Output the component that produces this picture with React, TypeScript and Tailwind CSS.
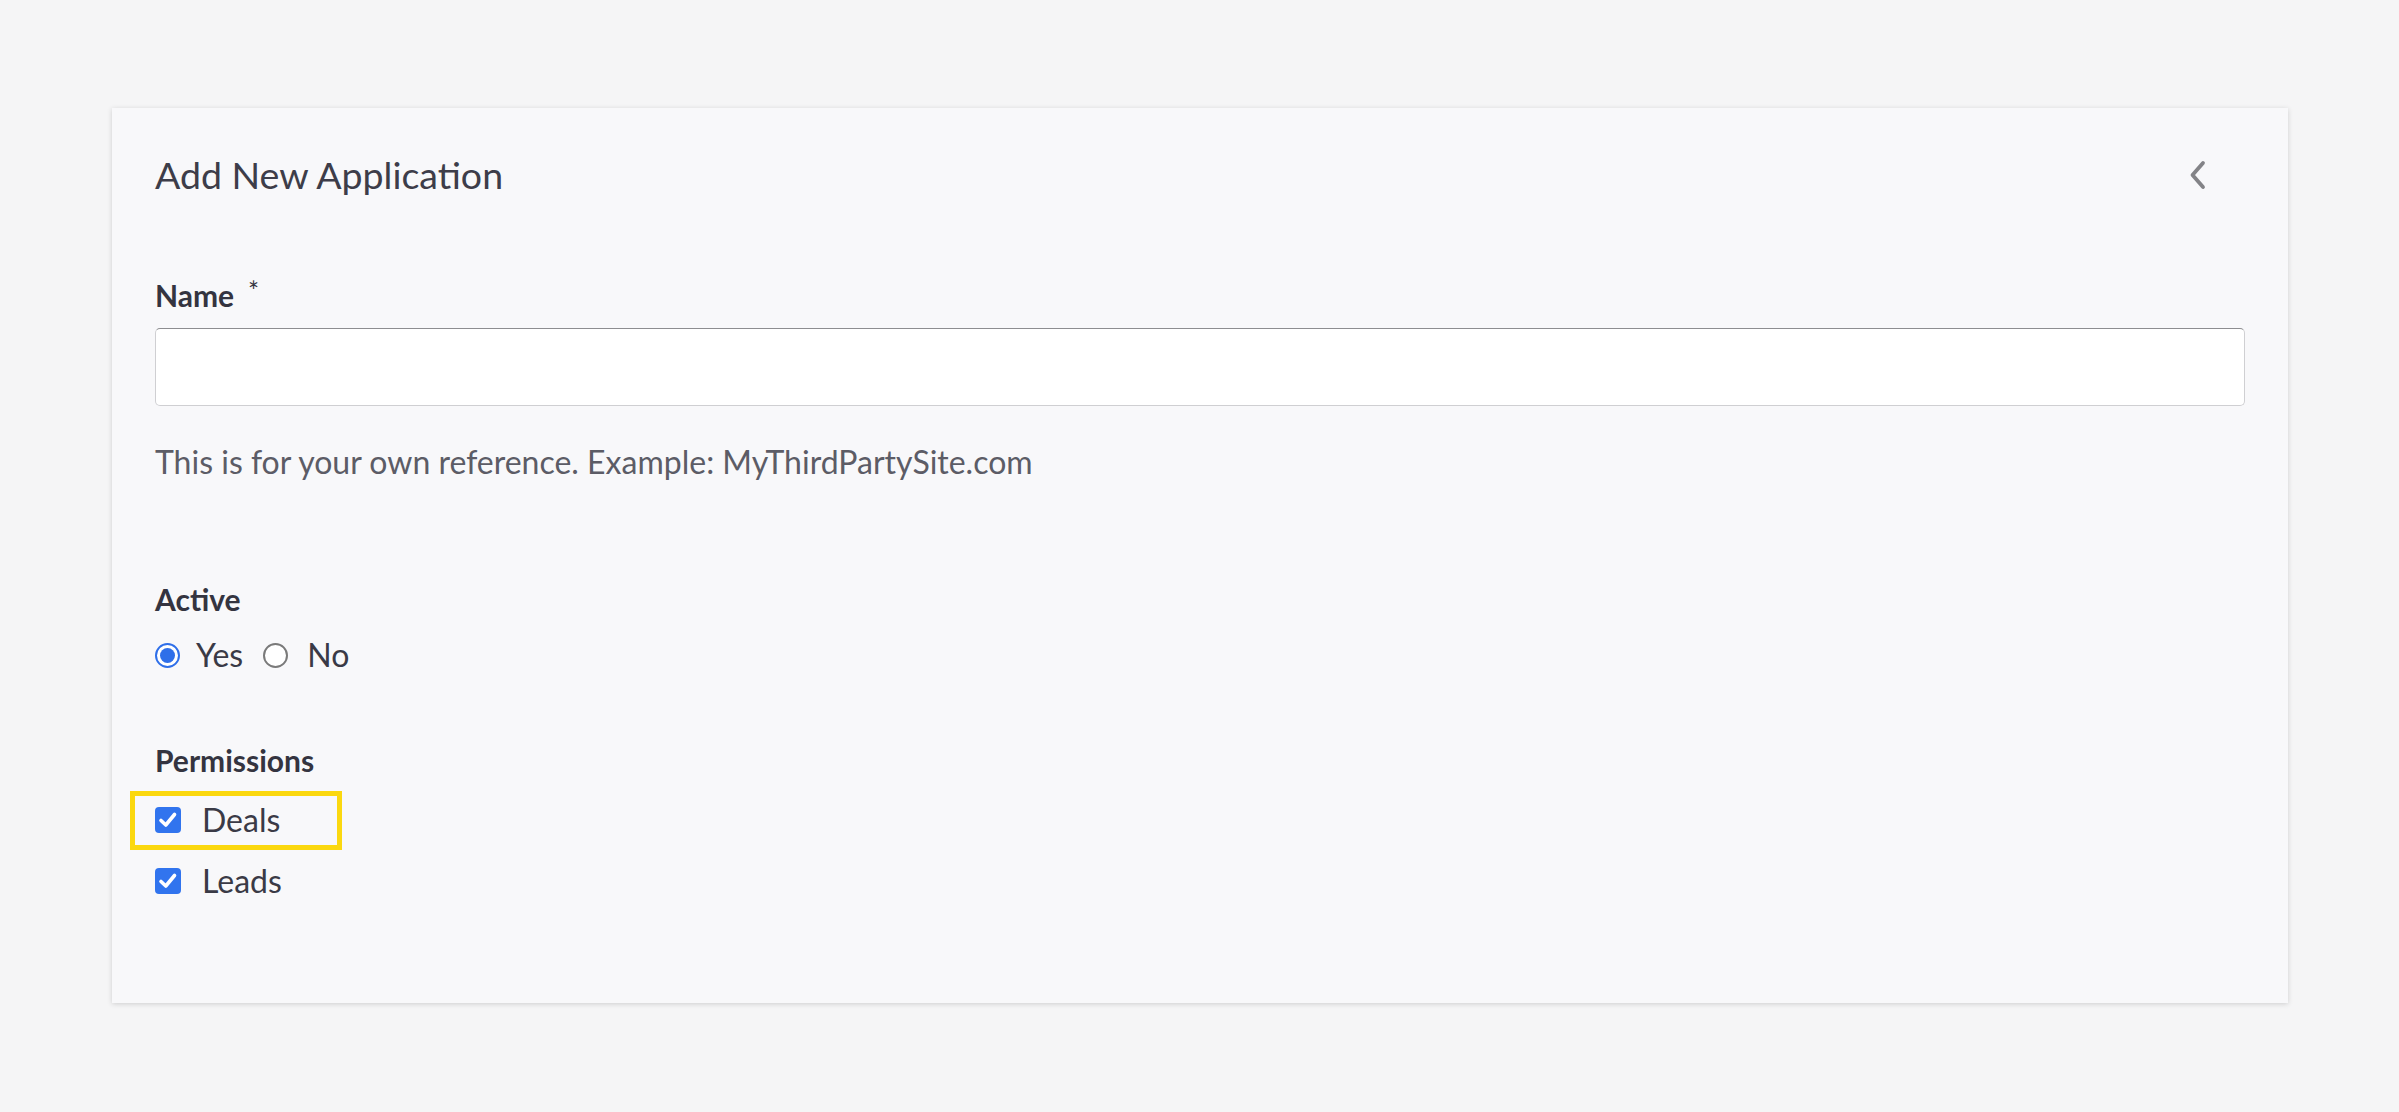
import { useState } from 'react'

const labelCls = "text-[30px] leading-[36px] font-bold text-[#343440]"

function Radio({ checked }: { checked: boolean }) {
  return checked ? (
    <span className="flex h-[25px] w-[25px] shrink-0 items-center justify-center rounded-full border-[2px] border-[#2f6fe9] bg-white">
      <span className="h-[15px] w-[15px] rounded-full bg-[#2f6fe9]" />
    </span>
  ) : (
    <span className="block h-[25px] w-[25px] shrink-0 rounded-full border-[2px] border-[#7a7a7a] bg-white" />
  )
}

function Checkbox() {
  return (
    <span className="flex h-[26px] w-[26px] shrink-0 items-center justify-center rounded-[4px] bg-[#3174ee]">
      <svg width="26" height="26" viewBox="0 0 26 26" fill="none">
        <path d="M6 13.5 L10.8 18 L19.5 7.5" stroke="white" strokeWidth="3.6" strokeLinecap="round" strokeLinejoin="round" />
      </svg>
    </span>
  )
}

export default function App() {
  const [name, setName] = useState('')

  return (
    <div className="min-h-screen bg-[#f5f5f6] pl-[112px] pt-[108px] font-['Lato',sans-serif]">
      <div className="h-[895px] w-[2176px] bg-[#f8f8fa] px-[43px] pt-[45px] shadow-[0_1px_5px_rgba(0,0,0,0.16)]">
        <div className="flex items-center justify-between">
          <h1 className="text-[37.5px] leading-[44px] font-normal text-[#3d3d49]">
            Add New Application
          </h1>
          <svg className="mr-[37px]" width="20" height="30" viewBox="0 0 20 30" fill="none">
            <path d="M15 3 L4.5 15 L15 27" stroke="#838387" strokeWidth="3.8" strokeLinecap="round" strokeLinejoin="round" />
          </svg>
        </div>

        <div className={`${labelCls} mt-[80px] flex items-start`}>
          Name
          <span className="ml-[14px] mt-[-1px] text-[26px] leading-[30px] font-normal">*</span>
        </div>
        <input
          value={name}
          onChange={(e) => setName(e.target.value)}
          className="mt-[15px] block h-[78px] w-full rounded-[5px] border border-[#cfcfd2] border-t-[#8d8d90] bg-white px-4 text-[30px] outline-none"
        />
        <p className="mt-[37px] text-[32px] leading-[38px] text-[#5c5c66]">
          This is for your own reference. Example: MyThirdPartySite.com
        </p>

        <div className={`${labelCls} mt-[100px]`}>Active</div>
        <div className="mt-[19px] flex h-[38px] items-center text-[32px] leading-[38px] text-[#3a3a46]">
          <Radio checked />
          <span className="ml-[16px]">Yes</span>
          <span className="ml-[20px] flex">
            <Radio checked={false} />
          </span>
          <span className="ml-[19px]">No</span>
        </div>

        <div className={`${labelCls} mt-[68px]`}>Permissions</div>
        <div className="relative mt-[23px] flex h-[38px] items-center text-[32px] leading-[38px] text-[#3a3a46]">
          <Checkbox />
          <span className="ml-[21px]">Deals</span>
          <span className="absolute left-[-25px] top-[-10px] h-[59px] w-[212px] border-[5px] border-[#fbd80f]" />
        </div>
        <div className="mt-[23px] flex h-[38px] items-center text-[32px] leading-[38px] text-[#3a3a46]">
          <Checkbox />
          <span className="ml-[21px]">Leads</span>
        </div>
      </div>
    </div>
  )
}
